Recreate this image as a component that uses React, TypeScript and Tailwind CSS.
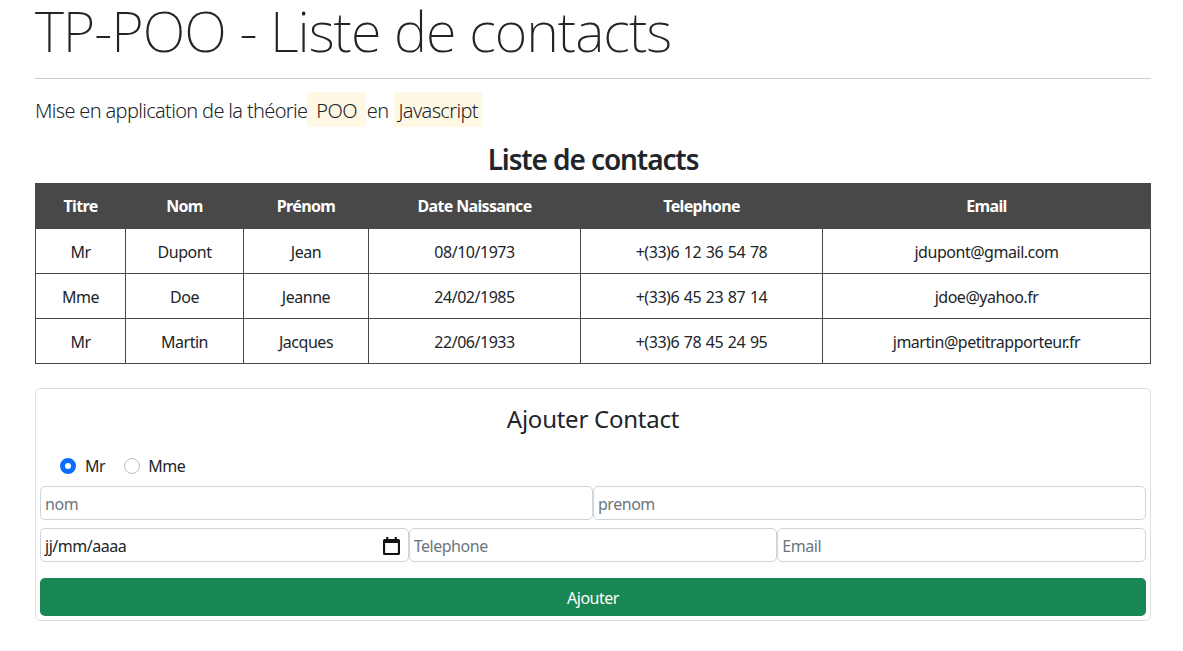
import { FC } from "react";

interface Contact {
  titre: string;
  nom: string;
  prenom: string;
  naissance: string;
  telephone: string;
  email: string;
}

const contacts: Contact[] = [
  { titre: "Mr", nom: "Dupont", prenom: "Jean", naissance: "08/10/1973", telephone: "+(33)6 12 36 54 78", email: "jdupont@gmail.com" },
  { titre: "Mme", nom: "Doe", prenom: "Jeanne", naissance: "24/02/1985", telephone: "+(33)6 45 23 87 14", email: "jdoe@yahoo.fr" },
  { titre: "Mr", nom: "Martin", prenom: "Jacques", naissance: "22/06/1933", telephone: "+(33)6 78 45 24 95", email: "jmartin@petitrapporteur.fr" },
];

const headers = ["Titre", "Nom", "Prénom", "Date Naissance", "Telephone", "Email"];

const inputClass =
  "h-[34px] min-w-0 flex-1 rounded-[5px] border border-[#ced4da] bg-white px-[4px] pt-px text-[16px] tracking-[-0.47px] text-[#212529] outline-none placeholder:text-[#6c757d]";

const Field: FC<{ placeholder: string }> = ({ placeholder }) => (
  <input type="text" placeholder={placeholder} className={inputClass} />
);

const CalendarIcon = () => (
  <svg width="17" height="18" viewBox="0 0 16 18" preserveAspectRatio="none" className="mr-[4px] shrink-0">
    <path d="M3 0h2v2h6V0h2v2h1.5A1.5 1.5 0 0 1 16 3.500V16.500A1.500 1.500 0 0 1 14.500 18H1.500A1.500 1.500 0 0 1 0 16.500V3.500A1.500 1.500 0 0 1 1.500 2H3z" fill="#111" />
    <rect x="2" y="6" width="12" height="10" fill="#fff" />
  </svg>
);

export default function App() {
  return (
    <div className="bg-white pr-[32px] pl-[35px] font-['Noto_Sans',sans-serif] text-[#212529]">
      <h1 className="h-[78px] text-[56px] leading-[60px] font-extralight tracking-[-1px] whitespace-nowrap">
        TP-POO - Liste de contacts
      </h1>
      <hr className="border-t border-[#cfcfcf]" />
      <p className="mt-[13px] flex h-[35px] items-center pt-[2px] text-[20px] font-light tracking-[-0.67px]">
        Mise en application de la théorie
        <span className="-mt-[2px] flex h-[35px] items-center bg-[#fff8e5] px-[9px] pt-[2px]">POO</span>
        <span className="px-px">en</span>
        <span className="-mt-[2px] ml-[5px] flex h-[35px] items-center bg-[#fff8e5] px-[4px] pt-[2px]">Javascript</span>
      </p>
      <h2 className="mt-[14px] mb-[6px] text-center text-[28px] leading-[36px] font-semibold tracking-[-1.1px]">Liste de contacts</h2>
      <table className="w-[1115px] table-fixed border-collapse text-center text-[16px] tracking-[-0.47px]">
        <colgroup>
          <col className="w-[90px]" />
          <col className="w-[118px]" />
          <col className="w-[125px]" />
          <col className="w-[212px]" />
          <col className="w-[242px]" />
          <col className="w-[328px]" />
        </colgroup>
        <thead>
          <tr className="h-[45px] bg-[#484848] text-white">
            {headers.map((h) => (
              <th key={h} className="border border-[#484848] font-bold tracking-[-0.65px]">{h}</th>
            ))}
          </tr>
        </thead>
        <tbody>
          {contacts.map((c) => (
            <tr key={c.email} className="h-[45px]">
              <td className="border border-[#484848] pt-px">{c.titre}</td>
              <td className="border border-[#484848] pt-px">{c.nom}</td>
              <td className="border border-[#484848] pt-px">{c.prenom}</td>
              <td className="border border-[#484848] pt-px">{c.naissance}</td>
              <td className="border border-[#484848] pt-px [word-spacing:1px]">{c.telephone}</td>
              <td className="border border-[#484848] pt-px">{c.email}</td>
            </tr>
          ))}
        </tbody>
      </table>

      <div className="mt-[24px] h-[233px] rounded-[5px] border border-[#dfdfdf] px-[4px]">
        <h3 className="mt-[12px] text-center text-[24px] leading-[36px] tracking-[-0.25px]">Ajouter Contact</h3>
        <div className="mt-[17px] flex h-[24px] items-center pl-[20px] text-[16px] tracking-[-0.47px]">
          <span className="h-[16px] w-[16px] rounded-full border-[5px] border-[#0d6efd] bg-white" />
          <span className="ml-[9px]">Mr</span>
          <span className="ml-[19px] h-[16px] w-[16px] rounded-full border border-[#bfbfbf] bg-white" />
          <span className="ml-[8px]">Mme</span>
        </div>
        <div className="mt-[8px] flex">
          <Field placeholder="nom" />
          <Field placeholder="prenom" />
        </div>
        <div className="mt-[8px] flex">
          <div className="flex h-[34px] min-w-0 flex-1 items-center justify-between rounded-[5px] border border-[#ced4da] px-[4px] pt-px text-[16px] tracking-[-0.47px]">
            <span>jj/mm/aaaa</span>
            <CalendarIcon />
          </div>
          <Field placeholder="Telephone" />
          <Field placeholder="Email" />
        </div>
        <button className="mt-[16px] h-[38px] w-full rounded-[5px] bg-[#198754] pt-px text-[16px] tracking-[-0.47px] text-white">Ajouter</button>
      </div>
    </div>
  );
}
